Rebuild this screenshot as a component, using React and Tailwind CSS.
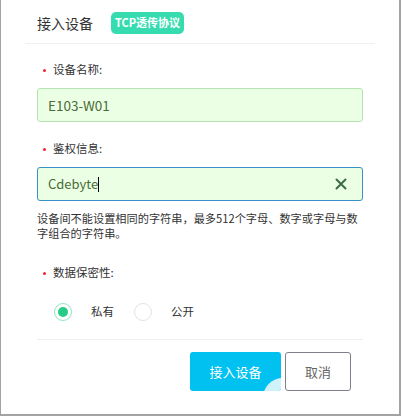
import React, { useState } from 'react';

const font = { fontFamily: '"Noto Sans CJK SC", "Noto Sans", sans-serif' };

const Label = ({ children }) => (
  <div className="flex items-center h-[14px] pl-[6px] text-[11.5px] leading-none text-[#333]">
    <span className="w-[3px] h-[3px] rounded-full bg-[#f5222d] mr-[7px]" />
    {children}
  </div>
);

const Radio = ({ checked, label, onClick, className = '' }) => (
  <button onClick={onClick} className={`flex items-center ${className}`}>
    <span className={`w-[18px] h-[18px] rounded-full border flex items-center justify-center ${checked ? 'border-[#8ee6c0]' : 'border-[#e3e3e3]'}`}>
      {checked && <span className="w-[10px] h-[10px] rounded-full bg-[#25cc86]" />}
    </span>
    <span className="ml-[19px]">{label}</span>
  </button>
);

const ConnectDevice = () => {
  const [name] = useState('E103-W01');
  const [auth, setAuth] = useState('Cdebyte');
  const [privacy, setPrivacy] = useState('private');

  return (
    <div className="w-[402px] h-[416px] bg-white" style={font}>
      <div className="w-[401px] h-[416px] border-l border-r-2 border-b-2 border-[#a3a3a3] bg-white flex flex-col">
        <div className="flex items-center h-[43px] pl-[36px] pt-[2px]">
          <span className="text-[14px] text-[#333] leading-none">接入设备</span>
          <span className="ml-[18px] h-[22px] px-[4px] rounded-[5px] bg-[#36dcb0] text-white text-[11px] font-bold flex items-center leading-none">
            TCP透传协议
          </span>
        </div>
        <div className="mx-[24px] h-px bg-[#eff1f3]" />

        <div className="px-[36px] pt-[19px] flex flex-col">
          <Label>设备名称:</Label>
          <div className="mt-[11px] h-[34px] rounded-[3px] border border-[#b7e2b2] bg-[#eaffe4] flex items-center pl-[10px] text-[13.5px] text-[#4a6a38]">
            {name}
          </div>

          <div className="mt-[20px]">
            <Label>鉴权信息:</Label>
          </div>
          <div className="mt-[11px] h-[34px] rounded-[3px] border border-[#3a8fc8] bg-[#eaffe4] flex items-center pl-[10px] pr-[15px] text-[13px] text-[#4a6a38]">
            <span>{auth}</span>
            <span className="w-px h-[15px] bg-black" />
            <button className="ml-auto text-[#3b6b48]" onClick={() => setAuth('')}>
              <svg width="12" height="12" viewBox="0 0 12 12">
                <path d="M1.5 1.5 L10.5 10.5 M10.5 1.5 L1.5 10.5" stroke="currentColor" strokeWidth="2" strokeLinecap="round" />
              </svg>
            </button>
          </div>

          <p className="mt-[10px] text-[11.2px] leading-[15px] text-[#333] pr-[4px]">
            设备间不能设置相同的字符串，最多512个字母、数字或字母与数字组合的字符串。
          </p>

          <div className="mt-[25px]">
            <Label>数据保密性:</Label>
          </div>

          <div className="mt-[22px] h-[20px] flex items-center pl-[17px] text-[11.5px] text-[#333]">
            <Radio checked={privacy === 'private'} label="私有" onClick={() => setPrivacy('private')} />
            <Radio checked={privacy === 'public'} label="公开" onClick={() => setPrivacy('public')} className="ml-[20px]" />
          </div>

          <div className="mt-[17px] h-px bg-[#eef0f2]" />

          <div className="mt-[12px] flex justify-end pr-[12px] gap-[4px]">
            <button className="relative overflow-hidden w-[91px] h-[39px] rounded-[3px] bg-[#00c1f0] text-white text-[13px]">
              <span className="relative">接入设备</span>
              <span className="absolute left-[73px] top-[26px] w-[40px] h-[40px] rounded-full bg-[#d0f3fb]" />
            </button>
            <button className="w-[66px] h-[39px] rounded-[3px] border border-[#7d808c] bg-white text-[#666] text-[13px]">
              取消
            </button>
          </div>
        </div>
      </div>
    </div>
  );
};

export default ConnectDevice;
